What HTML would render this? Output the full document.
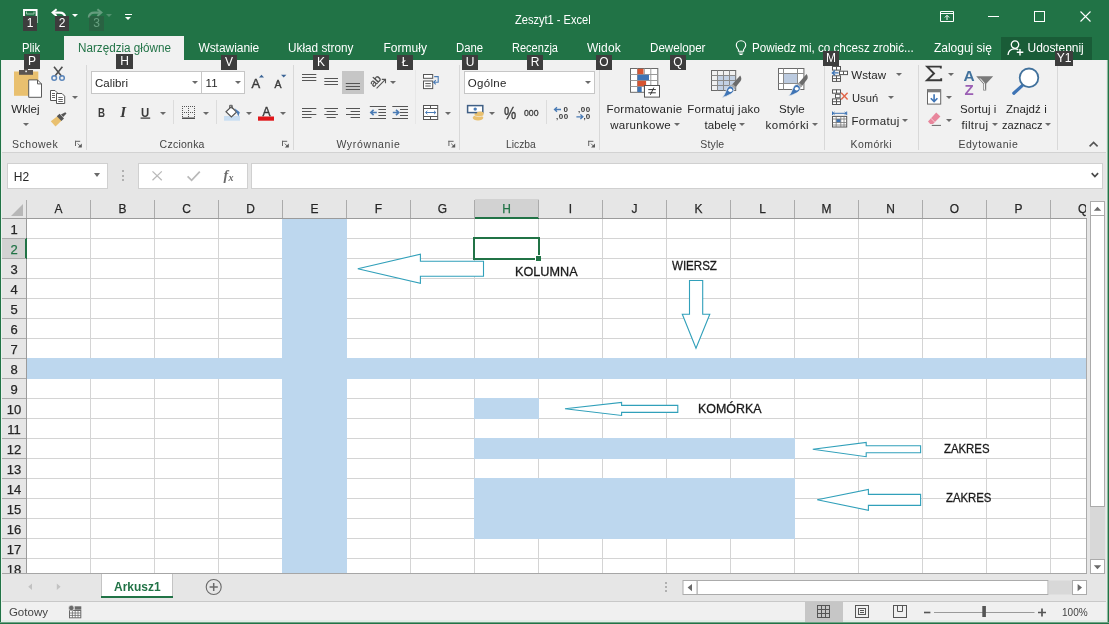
<!DOCTYPE html>
<html><head><meta charset="utf-8">
<style>
*{box-sizing:border-box;margin:0;padding:0}
html,body{width:1109px;height:624px;overflow:hidden}
body{position:relative;background:#e6e6e6;font-family:"Liberation Sans",sans-serif;font-size:12px;color:#262626}
.a{position:absolute}
svg{position:absolute;overflow:visible}
.t{position:absolute;white-space:nowrap}
.kt{position:absolute;background:#3d3d3d;color:#fff;font-size:12px;line-height:15px;height:15px;text-align:center}
.sep{position:absolute;top:65px;width:1px;height:85px;background:#d8d8d8}
.dd{position:absolute;width:0;height:0;border-left:3px solid transparent;border-right:3px solid transparent;border-top:3px solid #6a6a6a}
.ch{position:absolute;top:200px;height:18px;font-size:13px;line-height:18px;text-align:center;color:#262626;width:64px;-webkit-text-stroke:.25px;transform:scaleX(.92)}
.rh{position:absolute;left:1px;width:26px;height:20px;font-size:13px;line-height:21px;text-align:center;color:#262626;-webkit-text-stroke:.25px}
.box{position:absolute;background:#fff;border:1px solid #c6c6c6}
</style></head><body>
<div class="a" style="left:0;top:0;width:1109px;height:60px;background:#217346"></div>
<div class="a" style="left:64px;top:36px;width:120px;height:24px;background:#f1f1f1"></div>
<div class="a" style="left:1px;top:60px;width:1106px;height:92px;background:#f1f1f1"></div>
<div class="a" style="left:1px;top:152px;width:1106px;height:1px;background:#d2d2d2"></div>
<!-- QAT: save -->
<svg style="left:22.6px;top:8.6px" width="15" height="14" viewBox="0 0 15 14"><path d="M1 1H13.6V13H1Z" fill="none" stroke="#fff" stroke-width="1.9"/><path d="M3.5 2.5V5H11V2.5" fill="none" stroke="#9cc4ad" stroke-width="1"/></svg>
<!-- undo -->
<svg style="left:51px;top:8px" width="16" height="12" viewBox="0 0 16 12"><path d="M5.6 1.2L1.6 4.6L5.6 8" fill="none" stroke="#fff" stroke-width="2"/><path d="M2.2 4.6H8.5C12 4.6 14 6.5 14.2 9.5" fill="none" stroke="#fff" stroke-width="2.1"/></svg>
<div class="dd" style="left:72px;top:13.5px;border-top-color:#fff"></div>
<!-- redo (disabled) -->
<svg style="left:87px;top:8px;opacity:.3" width="16" height="12" viewBox="0 0 16 12"><path d="M10.4 1.2L14.4 4.6L10.4 8" fill="none" stroke="#fff" stroke-width="2"/><path d="M13.8 4.6H7.5C4 4.6 2 6.5 1.8 9.5" fill="none" stroke="#fff" stroke-width="2.1"/></svg>
<div class="dd" style="left:106px;top:13.5px;border-top-color:#fff;opacity:.22"></div>
<!-- customize QAT -->
<div class="a" style="left:125px;top:14px;width:7px;height:1px;background:#fff"></div>
<div class="dd" style="left:125px;top:17px;border-top-color:#fff;border-left-width:3.5px;border-right-width:3.5px;border-top-width:3.5px"></div>
<!-- window controls -->
<svg style="left:940px;top:11px" width="14" height="11" viewBox="0 0 14 11"><path d="M.5 .5H13.5V10.5H.5Z M.5 2.5H13.5" fill="none" stroke="#fff" stroke-width="1"/><path d="M7 9V4.5M4.8 6.5L7 4.3L9.2 6.5" fill="none" stroke="#fff" stroke-width="1"/></svg>
<div class="a" style="left:988px;top:16px;width:11px;height:1px;background:#fff"></div>
<div class="a" style="left:1034px;top:11px;width:11px;height:11px;border:1px solid #fff"></div>
<svg style="left:1080px;top:11px" width="11" height="11" viewBox="0 0 11 11"><path d="M.5 .5L10.5 10.5M10.5 .5L.5 10.5" stroke="#fff" stroke-width="1.1"/></svg>
<!-- lightbulb -->
<svg style="left:735px;top:40px" width="12" height="15" viewBox="0 0 12 15"><path d="M6 .7C3.2 .7 1.3 2.8 1.3 5.2C1.3 7.2 2.6 8.2 3.4 9.6V11.2H8.6V9.6C9.4 8.2 10.7 7.2 10.7 5.2C10.7 2.8 8.8 .7 6 .7Z" fill="none" stroke="#fff" stroke-width="1.1"/><path d="M3.8 13H8.2M4.5 14.5H7.5" stroke="#fff" stroke-width="1"/></svg>
<!-- share -->
<div class="a" style="left:1001px;top:37px;width:91px;height:23px;background:#195c37"></div>
<svg style="left:1007px;top:40px" width="18" height="16" viewBox="0 0 18 16"><circle cx="8" cy="4.6" r="3.7" fill="none" stroke="#fff" stroke-width="1.3"/><path d="M1 15C1.2 11 4 8.8 8 8.8C9.5 8.8 10.5 9.2 11.2 9.6" fill="none" stroke="#fff" stroke-width="1.3"/><path d="M13 9V15.5M9.8 12.2H16.3" stroke="#fff" stroke-width="1.4"/></svg>

<div class="sep" style="left:86px"></div><div class="sep" style="left:293px"></div><div class="sep" style="left:459px"></div><div class="sep" style="left:599px"></div><div class="sep" style="left:824px"></div><div class="sep" style="left:918px"></div><div class="sep" style="left:1057px"></div>
<div class="a" style="left:173px;top:100px;width:1px;height:24px;background:#dcdcdc"></div>
<div class="a" style="left:216px;top:100px;width:1px;height:24px;background:#dcdcdc"></div>
<div class="a" style="left:415px;top:70px;width:1px;height:54px;background:#e7e7e7"></div>
<div class="a" style="left:546px;top:100px;width:1px;height:24px;background:#dcdcdc"></div>
<div class="box" style="left:91px;top:71px;width:111px;height:23px"></div>
<div class="box" style="left:201px;top:71px;width:44px;height:23px"></div>
<div class="box" style="left:464px;top:71px;width:131px;height:23px"></div>
<div class="a" style="left:342px;top:71px;width:22px;height:23px;background:#c6c6c6"></div>
<svg style="left:0;top:0" width="1109" height="160" viewBox="0 0 1109 160">

<!-- dialog launchers -->
<g transform="translate(75 140.8)"><path d="M0 .5H5.2M.5 0V5.2M2.8 2.8L5.6 5.6" fill="none" stroke="#666" stroke-width="1"/><path d="M6.8 2.8V6.8H2.8Z" fill="#5a5a5a"/></g><g transform="translate(282 140.8)"><path d="M0 .5H5.2M.5 0V5.2M2.8 2.8L5.6 5.6" fill="none" stroke="#666" stroke-width="1"/><path d="M6.8 2.8V6.8H2.8Z" fill="#5a5a5a"/></g><g transform="translate(448.4 140.8)"><path d="M0 .5H5.2M.5 0V5.2M2.8 2.8L5.6 5.6" fill="none" stroke="#666" stroke-width="1"/><path d="M6.8 2.8V6.8H2.8Z" fill="#5a5a5a"/></g><g transform="translate(588.2 140.8)"><path d="M0 .5H5.2M.5 0V5.2M2.8 2.8L5.6 5.6" fill="none" stroke="#666" stroke-width="1"/><path d="M6.8 2.8V6.8H2.8Z" fill="#5a5a5a"/></g>
<!-- PASTE -->
<rect x="14" y="71.5" width="24.3" height="24.3" fill="#e9c06f"/>
<rect x="19" y="70" width="14" height="4.8" fill="#5b5450"/><rect x="24" y="68" width="4" height="3" fill="#5b5450"/><rect x="25.3" y="70.6" width="1.6" height="1.6" fill="#f1f1f1"/>
<path d="M28.7 79.9H37.5L41.5 83.9V97.3H28.7Z" fill="#fff" stroke="#5a5a5a" stroke-width="1"/><path d="M37.5 79.9V83.9H41.5" fill="none" stroke="#5a5a5a" stroke-width="1"/>
<!-- scissors -->
<path d="M54 66.8L61.6 76.2M62.4 66.8L54.8 76.2" stroke="#4f4f4f" stroke-width="1.6" fill="none"/>
<circle cx="54.2" cy="78" r="2.3" fill="none" stroke="#5b86bb" stroke-width="1.5"/><circle cx="62" cy="78" r="2.3" fill="none" stroke="#5b86bb" stroke-width="1.5"/>
<!-- copy -->
<path d="M50.5 90.5H55L57.2 92.7V100.5H50.5Z" fill="#fff" stroke="#555" stroke-width="1"/><path d="M52 93.5H55M52 95.5H55M52 97.5H55" stroke="#555" stroke-width=".9"/>
<path d="M56.5 93.5H62L64.7 96.2V103.5H56.5Z" fill="#fff" stroke="#555" stroke-width="1"/><path d="M58.3 97.5H62.8M58.3 99.5H62.8M58.3 101.5H62.8" stroke="#555" stroke-width=".9"/>
<!-- painter -->
<path d="M57.3 116.3L61.5 120.8L55.5 126.6L50.8 121.2Z" fill="#e9c06f"/>
<path d="M56.8 116.2L59.6 113.8L64 118.6L61.4 121Z" fill="#555"/><path d="M61 114.5L65.3 112.2L66.5 113.6L63.2 117Z" fill="#555"/>
</svg>
<div class="dd" style="left:23px;top:123px"></div>
<div class="dd" style="left:72px;top:96px"></div>

<svg style="left:0;top:0" width="1109" height="160" viewBox="0 0 1109 160">
<!-- underline for U -->
<rect x="140.6" y="117.5" width="9.6" height="1.2" fill="#333"/>
<!-- border icon -->
<g stroke="#555" stroke-width="1" fill="none"><path d="M182.5 106V118M188.5 106V118M194.5 106V118M182 106.5H195M182 112.5H195" stroke-dasharray="1 1"/><path d="M182 118.2H195" stroke="#333" stroke-width="1.3"/></g>
<!-- bucket -->
<rect x="224" y="116" width="16" height="4.7" fill="#c9def2"/>
<path d="M231.2 106.8L236.6 112L231.4 117L226 111.8Z" fill="#fff" stroke="#555" stroke-width="1.2"/>
<path d="M229.7 108.5V105.3H232.2V109" fill="none" stroke="#555" stroke-width="1"/>
<path d="M234.6 108.2L239.8 112.3L238.3 116.6L236.8 112.5Z" fill="#4a7bb5"/>
<!-- font color bar -->
<rect x="258" y="116.5" width="16" height="4.2" fill="#e0171b"/>
<!-- grow/shrink font triangles -->
<path d="M259 77.5L261.5 74.8L264 77.5Z" fill="#3b6496"/>
<path d="M281 74.8H286.4L283.7 77.5Z" fill="#3b6496"/>
</svg>
<div class="dd" style="left:192px;top:81px"></div>
<div class="dd" style="left:235px;top:81px"></div>
<div class="dd" style="left:585px;top:81px"></div>
<div class="dd" style="left:160px;top:112px"></div>
<div class="dd" style="left:203px;top:112px"></div>
<div class="dd" style="left:246px;top:112px"></div>
<div class="dd" style="left:280px;top:112px"></div>

<svg style="left:0;top:0;will-change:transform" width="1109" height="160" viewBox="0 0 1109 160">
<g stroke="#555" stroke-width="1.1" fill="none">
<!-- top/middle/bottom align -->
<path d="M302 74.5H316.3M302 77.5H316.3M302 80.5H316.3"/>
<path d="M324.3 78.5H338M324.3 81.5H338M324.3 84.5H338"/>
<path d="M345.8 83.5H360M345.8 86.5H360M345.8 89.5H360"/>
<!-- left/center/right -->
<path d="M302 108.5H316.3M302 111.5H311.5M302 114.5H316.3M302 117.5H311.5"/>
<path d="M324.3 108.5H338M326.6 111.5H335.7M324.3 114.5H338M326.6 117.5H335.7"/>
<path d="M346 108.5H360M350.6 111.5H360M346 114.5H360M350.6 117.5H360"/>
<!-- indents -->
<path d="M369.8 106.5H386M378.4 109.5H386M378.4 112.5H386M378.4 115.5H386M369.8 118.5H386"/>
<path d="M392.3 106.5H408M400 109.5H408M400 112.5H408M400 115.5H408M392.3 118.5H408"/>
</g>
<g stroke="#4a7bb5" stroke-width="1.6" fill="none"><path d="M376.8 112.5H371M373.6 109.8L370.8 112.5L373.6 115.2"/><path d="M392.8 112.5H398.6M396 109.8L398.8 112.5L396 115.2"/></g>
<!-- orientation -->
<g transform="translate(376.6 80.6) rotate(-47)"><text x="-7" y="2.6" font-family="Liberation Sans,sans-serif" font-size="10.5" fill="#444" stroke="#444" stroke-width=".3">ab</text></g>
<path d="M376.6 88.4L385.2 79.6M381.8 79.4H385.5V83.2" stroke="#555" stroke-width="1.1" fill="none"/>
<!-- wrap text -->
<g stroke="#555" stroke-width="1" fill="none"><rect x="423.5" y="74.5" width="9.2" height="3.8" fill="#fff"/><rect x="423.5" y="81" width="9.2" height="7.6" fill="#fff"/><path d="M425.3 83.6H430.8M425.3 86H430.8"/></g>
<path d="M434.2 76.6H438.2V82.3H433.8M435.8 80.2L433.6 82.3L435.8 84.4" stroke="#4a7bb5" stroke-width="1.1" fill="none"/>
<!-- merge -->
<g stroke="#555" stroke-width="1" fill="none"><rect x="423.5" y="105.5" width="14.2" height="14" fill="#fff"/><path d="M423.5 108.5H437.7M423.5 116.5H437.7M430.5 105.5V108.5M430.5 116.5V119.5"/></g>
<path d="M425.6 112.5H435.8M427.4 110.8L425.6 112.5L427.4 114.2M434 110.8L435.8 112.5L434 114.2" stroke="#4a7bb5" stroke-width="1" fill="none"/>
<!-- currency -->
<ellipse cx="478" cy="117.8" rx="5.3" ry="2.6" fill="#e9c06f"/><ellipse cx="479" cy="114.2" rx="4.8" ry="2.4" fill="#e9c06f" stroke="#f1f1f1" stroke-width=".6"/>
<rect x="467.6" y="105.6" width="15.2" height="7" fill="#fff" stroke="#3f5f85" stroke-width="1.5"/><circle cx="475.2" cy="109.1" r="1.7" fill="#4a7bb5"/>
<ellipse cx="480.2" cy="113.3" rx="3.4" ry="1.7" fill="#e9c06f"/>
<!-- decimals arrows -->
<g stroke="#4a7bb5" stroke-width="1.3" fill="none"><path d="M561 109.5H554.6M557 107.2L554.5 109.5L557 111.8"/><path d="M576.4 116.8H582.8M580.4 114.5L582.9 116.8L580.4 119.1"/></g>
</svg>
<div class="dd" style="left:390px;top:81px"></div>
<div class="dd" style="left:445px;top:112px"></div>
<div class="dd" style="left:489px;top:112px"></div>

<svg style="left:0;top:0" width="1109" height="160" viewBox="0 0 1109 160">
<!-- conditional formatting -->
<rect x="630.5" y="68.5" width="27.3" height="23.8" fill="#fff" stroke="#6a6a6a" stroke-width="1"/>
<path d="M630.5 74.5H657.8M630.5 80.5H657.8M630.5 86.5H657.8M637.5 68.5V92.3M644.3 68.5V92.3M650.8 68.5V92.3" stroke="#9a9a9a" stroke-width="1" fill="none"/>
<rect x="637.5" y="68.8" width="6" height="5.4" fill="#d65532"/><rect x="637.5" y="74.8" width="11.5" height="5.4" fill="#3e74b5"/><rect x="637.5" y="80.8" width="8.6" height="5.4" fill="#d65532"/><rect x="637.5" y="86.8" width="4.2" height="5.2" fill="#3e74b5"/>
<rect x="644.5" y="85.5" width="15" height="11.6" fill="#fff" stroke="#555" stroke-width="1"/>
<path d="M648.3 89.6H655.8M648.3 92.8H655.8M653.8 87.6L650.4 94.8" stroke="#333" stroke-width="1" fill="none"/>
<!-- format as table -->
<rect x="717.5" y="75.2" width="18" height="15" fill="#c3d1e4"/>
<rect x="711.5" y="70.5" width="24.2" height="20" fill="none" stroke="#6a6a6a" stroke-width="1"/>
<path d="M711.5 75.5H735.7M711.5 80.5H735.7M711.5 85.5H735.7M717.5 70.5V90.5M723.5 70.5V90.5M729.5 70.5V90.5" stroke="#8a8a8a" stroke-width="1" fill="none"/>
<path d="M740.2 75.4C741.6 77.4 741.6 79.6 740.6 81L734.6 88.6L731.2 85.6Z" fill="#6b6b6b"/><path d="M732.6 84L736 87L733.6 89.6L730.2 86.6Z" fill="#a5a5a5"/>
<path d="M731 86C735.2 88 734.6 92 730.4 94.2C727.8 95.6 725.2 96.8 722.2 97.4C724.8 94.8 725.4 92.2 726.4 90C727.4 87.4 729 85.4 731 86Z" fill="#3e74b5" stroke="#f1f1f1" stroke-width=".7"/><ellipse cx="730.3" cy="90.2" rx="2" ry="1.7" fill="#fff"/>
<!-- cell styles -->
<rect x="778.5" y="68.5" width="25.4" height="21" fill="#fff" stroke="#6a6a6a" stroke-width="1"/>
<rect x="783.7" y="73.7" width="13.6" height="9.3" fill="#bccbe0"/>
<path d="M778.5 73.5H803.9M778.5 83.5H803.9M783.5 68.5V89.5M797.5 68.5V89.5" stroke="#8a8a8a" stroke-width="1" fill="none"/>
<path d="M806.6 74C808 76 808 78.2 807 79.6L801 87.2L797.6 84.2Z" fill="#6b6b6b"/><path d="M799 82.6L802.4 85.6L800 88.2L796.6 85.2Z" fill="#a5a5a5"/>
<path d="M797.4 84.6C801.6 86.6 801 90.6 796.8 92.8C794.2 94.2 791.6 95.4 788.6 96C791.2 93.4 791.8 90.8 792.8 88.6C793.8 86 795.4 84 797.4 84.6Z" fill="#3e74b5" stroke="#f1f1f1" stroke-width=".7"/><ellipse cx="796.7" cy="88.8" rx="2" ry="1.7" fill="#fff"/>
<!-- insert cells -->
<g stroke="#555" stroke-width="1" fill="#fff"><rect x="832.5" y="66.5" width="8" height="3.6"/><path d="M836.5 66.5V70.1" fill="none"/><rect x="839.5" y="71.2" width="8" height="3.4"/><path d="M843.5 71.2V74.6" fill="none"/><rect x="832.5" y="75.8" width="8" height="5.6"/><path d="M836.5 75.8V81.4M832.5 78.6H840.5" fill="none"/></g>
<path d="M838.6 72.9H832.6M835 70.6L832.4 72.9L835 75.2" stroke="#3e74b5" stroke-width="1.4" fill="none"/>
<!-- delete cells -->
<g stroke="#555" stroke-width="1" fill="#fff"><rect x="832.5" y="89.8" width="8" height="3.4"/><path d="M836.5 89.8V93.2" fill="none"/><rect x="835.5" y="94.3" width="4.6" height="3.5"/><rect x="832.5" y="98.9" width="8" height="5.6"/><path d="M836.5 98.9V104.5M832.5 101.7H840.5" fill="none"/></g>
<path d="M841.2 92.8L847.6 99.4M847.6 92.8L841.2 99.4" stroke="#e0674a" stroke-width="1.5" fill="none"/>
<!-- format cells -->
<path d="M832.5 113.3H846.7M832.5 111.5V115M846.7 111.5V115M834.5 112L833 113.3L834.5 114.6M844.7 112L846.2 113.3L844.7 114.6" stroke="#3e74b5" stroke-width="1" fill="none"/>
<rect x="832.5" y="116.4" width="14.2" height="10.6" fill="#fff" stroke="#555" stroke-width="1"/>
<rect x="836.3" y="119" width="4.4" height="3.4" fill="#3e74b5"/>
<path d="M832.5 119H846.7M832.5 122.5H846.7M832.5 125H846.7M836.2 116.4V127M840.8 116.4V127M844 116.4V127" stroke="#777" stroke-width=".8" fill="none"/>
<!-- sigma -->
<path d="M940.8 68.4V66.6H927.2L934 73.5L927 80.3H941.2V78.2" fill="none" stroke="#3a3a3a" stroke-width="1.9" stroke-linejoin="miter"/>
<!-- fill -->
<rect x="927.5" y="89.7" width="13.2" height="14.4" fill="#fff" stroke="#666" stroke-width="1"/><rect x="927.5" y="89.7" width="13.2" height="2.6" fill="#7c7c7c"/>
<path d="M934.1 94.2V101.2M930.8 98.2L934.1 101.5L937.4 98.2" stroke="#3e74b5" stroke-width="1.6" fill="none"/>
<!-- eraser -->
<path d="M936.2 112.6L940.4 116.6L933 124H930.2L928 121.4Z" fill="#e8869c"/><path d="M930.8 118.2L934.8 122.2" stroke="#f6cdd6" stroke-width="1"/>
<path d="M931.8 125.4H941" stroke="#666" stroke-width="1"/>
<!-- funnel -->
<path d="M976.2 76.2H993.2L986.2 83.8V90.6H983.2V83.8Z" fill="#7a7a7a"/><path d="M980 78.4L984.4 83.3V89.4H985.2" stroke="#fff" stroke-width="1" fill="none"/>
<!-- magnifier -->
<path d="M1022.2 85.6L1013.8 93.2" stroke="#3e74b5" stroke-width="3.2" stroke-linecap="round"/>
<circle cx="1029" cy="77.8" r="9.3" fill="#fff" stroke="#41719c" stroke-width="1.8"/>
<!-- collapse chevron -->
<path d="M1089.6 146.4L1093.6 142.4L1097.6 146.4" stroke="#555" stroke-width="1.6" fill="none"/>
</svg>
<div class="dd" style="left:674px;top:123px"></div>
<div class="dd" style="left:739px;top:123px"></div>
<div class="dd" style="left:812px;top:123px"></div>
<div class="dd" style="left:896px;top:73px"></div>
<div class="dd" style="left:888px;top:96px"></div>
<div class="dd" style="left:902px;top:119px"></div>
<div class="dd" style="left:948px;top:73px"></div>
<div class="dd" style="left:946px;top:96px"></div>
<div class="dd" style="left:946px;top:119px"></div>
<div class="dd" style="left:992px;top:123px"></div>
<div class="dd" style="left:1045px;top:123px"></div>

<div class="box" style="left:7px;top:163px;width:101px;height:26px;border-color:#d0d0d0"></div>
<div class="box" style="left:138px;top:163px;width:110px;height:26px;border-color:#d0d0d0"></div>
<div class="box" style="left:251px;top:163px;width:852px;height:26px;border-color:#d0d0d0"></div>
<div class="dd" style="left:94px;top:173px;border-left-width:3.5px;border-right-width:3.5px;border-top-width:4px"></div>
<div class="a" style="left:122px;top:170px;width:2px;height:2px;background:#b0b0b0"></div>
<div class="a" style="left:122px;top:175px;width:2px;height:2px;background:#b0b0b0"></div>
<div class="a" style="left:122px;top:179px;width:2px;height:2px;background:#b0b0b0"></div>
<svg style="left:0;top:155px;will-change:transform" width="1109" height="40" viewBox="0 155 1109 40">
<path d="M152.5 171.4L161.8 180.2M161.8 171.4L152.5 180.2" stroke="#b9b9b9" stroke-width="1.3" fill="none"/>
<path d="M187.6 176.4L191.6 180.4L199.8 171.6" stroke="#b9b9b9" stroke-width="1.7" fill="none"/>
<text x="223.6" y="180.4" font-family="Liberation Serif,serif" font-style="italic" font-weight="700" font-size="14" fill="#6a6a6a">f</text>
<text x="228.4" y="180.6" font-family="Liberation Serif,serif" font-style="italic" font-weight="700" font-size="10" fill="#6a6a6a">x</text>
<path d="M1091.7 173.2L1094.9 176.5L1098.1 173.2" stroke="#4a4a4a" stroke-width="1.7" fill="none"/>
</svg>

<div id="grid" class="a" style="left:0;top:0;width:1109px;height:624px;will-change:transform">
<div class="a" style="left:27px;top:219px;width:1060px;height:355px;background:#fff"></div>
<div class="a" style="left:27px;top:219px;width:1060px;height:355px;background-image:repeating-linear-gradient(to right,transparent 0,transparent 63px,#d4d4d4 63px,#d4d4d4 64px),repeating-linear-gradient(to bottom,transparent 0,transparent 19px,#d4d4d4 19px,#d4d4d4 20px)"></div>
<div class="a" style="left:282px;top:219px;width:65px;height:355px;background:#bdd7ee"></div>
<div class="a" style="left:27px;top:358px;width:1060px;height:21px;background:#bdd7ee"></div>
<div class="a" style="left:474px;top:398px;width:65px;height:21px;background:#bdd7ee"></div>
<div class="a" style="left:474px;top:438px;width:321px;height:21px;background:#bdd7ee"></div>
<div class="a" style="left:474px;top:478px;width:321px;height:61px;background:#bdd7ee"></div>
<div class="a" style="left:1086px;top:219px;width:1px;height:355px;background:#ababab"></div>
<div class="a" style="left:1px;top:199px;width:1086px;height:20px;background:#e6e6e6"></div>
<div class="a" style="left:1px;top:219px;width:26px;height:355px;background:#e6e6e6"></div>
<div class="a" style="left:475px;top:199px;width:64px;height:19px;background:#d2d2d2"></div>
<div class="a" style="left:1px;top:239px;width:25px;height:19px;background:#d2d2d2"></div>
<div class="a" style="left:1px;top:218px;width:1086px;height:1px;background:#9b9b9b"></div>
<div class="a" style="left:26px;top:219px;width:1px;height:355px;background:#9b9b9b"></div>
<div class="a" style="left:475px;top:217px;width:64px;height:2px;background:#217346"></div>
<div class="a" style="left:25px;top:238px;width:2px;height:21px;background:#217346"></div>
<div class="ch" style="left:27px;color:#262626;width:63px">A</div>
<div class="a" style="left:26px;top:200px;width:1px;height:18px;background:#ababab"></div>
<div class="ch" style="left:91px;color:#262626;width:63px">B</div>
<div class="a" style="left:90px;top:200px;width:1px;height:18px;background:#ababab"></div>
<div class="ch" style="left:155px;color:#262626;width:63px">C</div>
<div class="a" style="left:154px;top:200px;width:1px;height:18px;background:#ababab"></div>
<div class="ch" style="left:219px;color:#262626;width:63px">D</div>
<div class="a" style="left:218px;top:200px;width:1px;height:18px;background:#ababab"></div>
<div class="ch" style="left:283px;color:#262626;width:63px">E</div>
<div class="a" style="left:282px;top:200px;width:1px;height:18px;background:#ababab"></div>
<div class="ch" style="left:347px;color:#262626;width:63px">F</div>
<div class="a" style="left:346px;top:200px;width:1px;height:18px;background:#ababab"></div>
<div class="ch" style="left:411px;color:#262626;width:63px">G</div>
<div class="a" style="left:410px;top:200px;width:1px;height:18px;background:#ababab"></div>
<div class="ch" style="left:475px;color:#217346;width:63px">H</div>
<div class="a" style="left:474px;top:200px;width:1px;height:18px;background:#ababab"></div>
<div class="ch" style="left:539px;color:#262626;width:63px">I</div>
<div class="a" style="left:538px;top:200px;width:1px;height:18px;background:#ababab"></div>
<div class="ch" style="left:603px;color:#262626;width:63px">J</div>
<div class="a" style="left:602px;top:200px;width:1px;height:18px;background:#ababab"></div>
<div class="ch" style="left:667px;color:#262626;width:63px">K</div>
<div class="a" style="left:666px;top:200px;width:1px;height:18px;background:#ababab"></div>
<div class="ch" style="left:731px;color:#262626;width:63px">L</div>
<div class="a" style="left:730px;top:200px;width:1px;height:18px;background:#ababab"></div>
<div class="ch" style="left:795px;color:#262626;width:63px">M</div>
<div class="a" style="left:794px;top:200px;width:1px;height:18px;background:#ababab"></div>
<div class="ch" style="left:859px;color:#262626;width:63px">N</div>
<div class="a" style="left:858px;top:200px;width:1px;height:18px;background:#ababab"></div>
<div class="ch" style="left:923px;color:#262626;width:63px">O</div>
<div class="a" style="left:922px;top:200px;width:1px;height:18px;background:#ababab"></div>
<div class="ch" style="left:987px;color:#262626;width:63px">P</div>
<div class="a" style="left:986px;top:200px;width:1px;height:18px;background:#ababab"></div>
<div class="ch" style="left:1051px;color:#262626;width:35px;overflow:hidden;transform:none"><span style="position:absolute;left:27px;transform:scaleX(.92);transform-origin:0 0">Q</span></div>
<div class="a" style="left:1050px;top:200px;width:1px;height:18px;background:#ababab"></div>
<div class="rh" style="top:219px;color:#262626">1</div>
<div class="a" style="left:1px;top:238px;width:25px;height:1px;background:#ababab"></div>
<div class="rh" style="top:239px;color:#217346">2</div>
<div class="a" style="left:1px;top:258px;width:25px;height:1px;background:#ababab"></div>
<div class="rh" style="top:259px;color:#262626">3</div>
<div class="a" style="left:1px;top:278px;width:25px;height:1px;background:#ababab"></div>
<div class="rh" style="top:279px;color:#262626">4</div>
<div class="a" style="left:1px;top:298px;width:25px;height:1px;background:#ababab"></div>
<div class="rh" style="top:299px;color:#262626">5</div>
<div class="a" style="left:1px;top:318px;width:25px;height:1px;background:#ababab"></div>
<div class="rh" style="top:319px;color:#262626">6</div>
<div class="a" style="left:1px;top:338px;width:25px;height:1px;background:#ababab"></div>
<div class="rh" style="top:339px;color:#262626">7</div>
<div class="a" style="left:1px;top:358px;width:25px;height:1px;background:#ababab"></div>
<div class="rh" style="top:359px;color:#262626">8</div>
<div class="a" style="left:1px;top:378px;width:25px;height:1px;background:#ababab"></div>
<div class="rh" style="top:379px;color:#262626">9</div>
<div class="a" style="left:1px;top:398px;width:25px;height:1px;background:#ababab"></div>
<div class="rh" style="top:399px;color:#262626">10</div>
<div class="a" style="left:1px;top:418px;width:25px;height:1px;background:#ababab"></div>
<div class="rh" style="top:419px;color:#262626">11</div>
<div class="a" style="left:1px;top:438px;width:25px;height:1px;background:#ababab"></div>
<div class="rh" style="top:439px;color:#262626">12</div>
<div class="a" style="left:1px;top:458px;width:25px;height:1px;background:#ababab"></div>
<div class="rh" style="top:459px;color:#262626">13</div>
<div class="a" style="left:1px;top:478px;width:25px;height:1px;background:#ababab"></div>
<div class="rh" style="top:479px;color:#262626">14</div>
<div class="a" style="left:1px;top:498px;width:25px;height:1px;background:#ababab"></div>
<div class="rh" style="top:499px;color:#262626">15</div>
<div class="a" style="left:1px;top:518px;width:25px;height:1px;background:#ababab"></div>
<div class="rh" style="top:519px;color:#262626">16</div>
<div class="a" style="left:1px;top:538px;width:25px;height:1px;background:#ababab"></div>
<div class="rh" style="top:539px;color:#262626">17</div>
<div class="a" style="left:1px;top:558px;width:25px;height:1px;background:#ababab"></div>
<div class="rh" style="top:559px;color:#262626">18</div>
<svg class="a" style="left:10px;top:203px" width="14" height="14"><path d="M13 1V13H1Z" fill="#b7b7b7"/></svg>
<div class="a" style="left:473px;top:237px;width:67px;height:23px;border:2px solid #217346"></div>
<div class="a" style="left:535px;top:255px;width:6px;height:6px;background:#217346;border-left:1px solid #fff;border-top:1px solid #fff"></div>
</div>
<!-- hide gridlines under overflowing text -->
<div class="a" style="left:538px;top:261px;width:1px;height:17px;background:#fff"></div>
<div class="a" style="left:730px;top:399px;width:1px;height:19px;background:#fff"></div>
<div class="a" style="left:986px;top:439px;width:1px;height:19px;background:#fff"></div>
<svg style="left:0;top:219px" width="1109" height="355" viewBox="0 219 1109 355">
<g fill="#fff" stroke="#31a0ba" stroke-width="1.1" stroke-linejoin="miter">
<path d="M357.8 268.7L420.4 254.2V261.2H483.5V276.3H420.4V283.4Z"/>
<path d="M689.5 280.5H702.7V314.3H709.8L696 348.3L682.3 314.3H689.5Z"/>
<path d="M565 408.8L621.6 402.4V405.4H677.8V412.4H621.6V415.5Z"/>
<path d="M812.8 449.2L866.2 442.4V445.7H920.6V452.7H866.2V456.7Z"/>
<path d="M817.2 499.7L868.4 489.4V494.4H920.6V505.4H868.4V510.4Z"/>
</g>
</svg>

<!-- grid bottom line & sheet tab row -->
<div class="a" style="left:1px;top:574px;width:1105px;height:27px;background:#e6e6e6"></div>
<div class="a" style="left:1px;top:573px;width:1086px;height:1px;background:#a6a6a6"></div>
<div class="a" style="left:101px;top:574px;width:72px;height:22px;background:#fff;border-left:1px solid #c4c4c4;border-right:1px solid #c4c4c4"></div>
<div class="a" style="left:101px;top:596px;width:72px;height:2px;background:#217346"></div>
<svg style="left:0;top:570px" width="1109" height="54" viewBox="0 570 1109 54">
<path d="M32 583.4V590L28.2 586.7Z" fill="#c2c2c2"/><path d="M56.8 583.4V590L60.6 586.7Z" fill="#c2c2c2"/>
<circle cx="213.7" cy="587" r="7.5" fill="none" stroke="#6a6a6a" stroke-width="1.1"/><path d="M209.6 587H217.8M213.7 582.9V591.1" stroke="#6a6a6a" stroke-width="1.5"/>
<!-- hscroll -->
<rect x="697" y="580.5" width="351" height="14" fill="#fff" stroke="#ababab" stroke-width="1"/>
<rect x="1048.5" y="580.5" width="24" height="14" fill="#d8d8d8"/>
<rect x="683" y="580.5" width="14" height="14" fill="#fff" stroke="#ababab" stroke-width="1"/><path d="M692 584V591.2L687.6 587.6Z" fill="#6a6a6a"/>
<rect x="1072.5" y="580.5" width="14" height="14" fill="#fff" stroke="#ababab" stroke-width="1"/><path d="M1077.6 584V591.2L1082 587.6Z" fill="#6a6a6a"/>
</svg>
<div class="a" style="left:665px;top:582px;width:2px;height:2px;background:#b0b0b0"></div>
<div class="a" style="left:665px;top:586px;width:2px;height:2px;background:#b0b0b0"></div>
<div class="a" style="left:665px;top:590px;width:2px;height:2px;background:#b0b0b0"></div>
<!-- status bar -->
<div class="a" style="left:1px;top:601px;width:1105px;height:21px;background:#f0f0f0;border-top:1px solid #c8c8c8"></div>
<div class="a" style="left:1px;top:620px;width:1105px;height:2px;background:#e3ede7"></div>
<div class="a" style="left:805px;top:602px;width:38px;height:20px;background:#c6c6c6"></div>
<svg style="left:0;top:600px" width="1109" height="24" viewBox="0 600 1109 24">
<rect x="69.5" y="610.5" width="11.3" height="7.3" fill="#fff" stroke="#6a6a6a" stroke-width="1"/><rect x="74.6" y="606.3" width="6.7" height="3.4" fill="#6a6a6a"/>
<path d="M69.5 613H80.8M69.5 615.4H80.8M72.4 610.5V617.8M75.2 610.5V617.8M78 610.5V617.8" stroke="#6a6a6a" stroke-width=".8"/>
<circle cx="71.3" cy="608" r="2.7" fill="#6a6a6a" stroke="#f0f0f0" stroke-width=".6"/>
<g stroke="#555" stroke-width="1" fill="none">
<rect x="817.5" y="605.5" width="12" height="12"/><path d="M817.5 609.5H829.5M817.5 613.5H829.5M821.5 605.5V617.5M825.5 605.5V617.5"/>
<rect x="855.5" y="605.5" width="13" height="12"/><rect x="858.5" y="608.5" width="7" height="6"/><path d="M860 610.5H864M860 612.5H864"/>
<rect x="893.5" y="605.5" width="13" height="12"/><path d="M897.5 605.5V611.5H902.5V605.5"/>
</g>
<path d="M924 612.5H930.4" stroke="#555" stroke-width="1.6"/>
<path d="M934 612.5H1034.5" stroke="#9a9a9a" stroke-width="1"/>
<rect x="982.3" y="606" width="3.6" height="11" fill="#555"/>
<path d="M1038 612.5H1046M1042 608.5V616.5" stroke="#555" stroke-width="1.7"/>
</svg>
<!-- vscroll -->
<div class="a" style="left:1090px;top:201px;width:15px;height:373px;background:#d8d8d8"></div>
<div class="a" style="left:1090px;top:201px;width:15px;height:15px;background:#fff;border:1px solid #ababab"></div>
<div class="a" style="left:1090px;top:215px;width:15px;height:292px;background:#fff;border:1px solid #ababab"></div>
<div class="a" style="left:1090px;top:559px;width:15px;height:15px;background:#fff;border:1px solid #ababab"></div>
<svg style="left:1090px;top:201px" width="15" height="373" viewBox="0 0 15 373"><path d="M3.8 9.8H11.2L7.5 5.8Z" fill="#6a6a6a"/><path d="M3.8 364.2H11.2L7.5 368.2Z" fill="#6a6a6a"/></svg>

<div class="a" style="left:0;top:0;width:1109px;height:624px;will-change:transform"><div class="t" style="left:515.0px;top:14.0px;font-size:12px;line-height:12px;color:#ffffff;transform:scaleX(0.923);transform-origin:0 0;">Zeszyt1 - Excel</div>
<div class="t" style="left:21.6px;top:42.0px;font-size:12px;line-height:12px;color:#ffffff;transform:scaleX(0.936);transform-origin:0 0;">Plik</div>
<div class="t" style="left:77.5px;top:42.0px;font-size:12px;line-height:12px;color:#217346;transform:scaleX(0.974);transform-origin:0 0;">Narzędzia główne</div>
<div class="t" style="left:198.4px;top:42.0px;font-size:12px;line-height:12px;color:#ffffff;letter-spacing:-0.05px;">Wstawianie</div>
<div class="t" style="left:288.2px;top:42.0px;font-size:12px;line-height:12px;color:#ffffff;transform:scaleX(0.982);transform-origin:0 0;">Układ strony</div>
<div class="t" style="left:383.4px;top:42.0px;font-size:12px;line-height:12px;color:#ffffff;letter-spacing:0.04px;">Formuły</div>
<div class="t" style="left:456.2px;top:42.0px;font-size:12px;line-height:12px;color:#ffffff;transform:scaleX(0.945);transform-origin:0 0;">Dane</div>
<div class="t" style="left:512.2px;top:42.0px;font-size:12px;line-height:12px;color:#ffffff;transform:scaleX(0.919);transform-origin:0 0;">Recenzja</div>
<div class="t" style="left:586.9px;top:42.0px;font-size:12px;line-height:12px;color:#ffffff;letter-spacing:0.11px;">Widok</div>
<div class="t" style="left:650.4px;top:42.0px;font-size:12px;line-height:12px;color:#ffffff;transform:scaleX(0.967);transform-origin:0 0;">Deweloper</div>
<div class="t" style="left:752.3px;top:42.0px;font-size:12px;line-height:12px;color:#ffffff;transform:scaleX(0.970);transform-origin:0 0;">Powiedz mi, co chcesz zrobić...</div>
<div class="t" style="left:934.0px;top:42.0px;font-size:12px;line-height:12px;color:#ffffff;letter-spacing:-0.02px;">Zaloguj się</div>
<div class="t" style="left:1027.6px;top:42.0px;font-size:12px;line-height:12px;color:#ffffff;letter-spacing:-0.07px;">Udostępnij</div>
<div class="t" style="left:11.2px;top:104.0px;font-size:11.5px;line-height:11.5px;color:#262626;letter-spacing:0.09px;">Wklej</div>
<div class="t" style="left:12.0px;top:139.0px;font-size:10.5px;line-height:10.5px;color:#444444;letter-spacing:0.52px;">Schowek</div>
<div class="t" style="left:94.9px;top:78.0px;font-size:11.5px;line-height:11.5px;color:#262626;letter-spacing:0.10px;">Calibri</div>
<div class="t" style="left:205.6px;top:78.0px;font-size:11.5px;line-height:11.5px;color:#262626;">11</div>
<div class="t" style="left:159.6px;top:139.0px;font-size:10.5px;line-height:10.5px;color:#444444;letter-spacing:0.24px;">Czcionka</div>
<div class="t" style="left:336.4px;top:139.0px;font-size:10.5px;line-height:10.5px;color:#444444;letter-spacing:0.65px;">Wyrównanie</div>
<div class="t" style="left:467.7px;top:78.0px;font-size:11.5px;line-height:11.5px;color:#262626;letter-spacing:0.34px;">Ogólne</div>
<div class="t" style="left:506.4px;top:139.0px;font-size:10.5px;line-height:10.5px;color:#444444;transform:scaleX(0.978);transform-origin:0 0;">Liczba</div>
<div class="t" style="left:606.4px;top:104.0px;font-size:11.5px;line-height:11.5px;color:#262626;letter-spacing:0.26px;">Formatowanie</div>
<div class="t" style="left:610.2px;top:120.0px;font-size:11.5px;line-height:11.5px;color:#262626;letter-spacing:0.29px;">warunkowe</div>
<div class="t" style="left:687.3px;top:104.0px;font-size:11.5px;line-height:11.5px;color:#262626;letter-spacing:0.25px;">Formatuj jako</div>
<div class="t" style="left:704.4px;top:120.0px;font-size:11.5px;line-height:11.5px;color:#262626;letter-spacing:0.11px;">tabelę</div>
<div class="t" style="left:779.0px;top:104.0px;font-size:11.5px;line-height:11.5px;color:#262626;letter-spacing:0.01px;">Style</div>
<div class="t" style="left:765.6px;top:120.0px;font-size:11.5px;line-height:11.5px;color:#262626;letter-spacing:0.47px;">komórki</div>
<div class="t" style="left:700.3px;top:139.0px;font-size:10.5px;line-height:10.5px;color:#444444;letter-spacing:0.14px;">Style</div>
<div class="t" style="left:851.2px;top:70.0px;font-size:11.5px;line-height:11.5px;color:#262626;letter-spacing:0.12px;">Wstaw</div>
<div class="t" style="left:851.5px;top:93.0px;font-size:11.5px;line-height:11.5px;color:#262626;transform:scaleX(0.972);transform-origin:0 0;">Usuń</div>
<div class="t" style="left:851.5px;top:116.0px;font-size:11.5px;line-height:11.5px;color:#262626;letter-spacing:0.33px;">Formatuj</div>
<div class="t" style="left:850.5px;top:139.0px;font-size:10.5px;line-height:10.5px;color:#444444;letter-spacing:0.43px;">Komórki</div>
<div class="t" style="left:959.9px;top:104.0px;font-size:11.5px;line-height:11.5px;color:#262626;letter-spacing:0.10px;">Sortuj i</div>
<div class="t" style="left:961.4px;top:120.0px;font-size:11.5px;line-height:11.5px;color:#262626;letter-spacing:0.39px;">filtruj</div>
<div class="t" style="left:1006.0px;top:104.0px;font-size:11.5px;line-height:11.5px;color:#262626;letter-spacing:0.06px;">Znajdź i</div>
<div class="t" style="left:1001.8px;top:120.0px;font-size:11.5px;line-height:11.5px;color:#262626;transform:scaleX(0.962);transform-origin:0 0;">zaznacz</div>
<div class="t" style="left:958.4px;top:139.0px;font-size:10.5px;line-height:10.5px;color:#444444;letter-spacing:0.57px;">Edytowanie</div>
<div class="t" style="left:13.8px;top:171.0px;font-size:12px;line-height:12px;color:#262626;letter-spacing:0.06px;">H2</div>
<div class="t" style="left:514.7px;top:265.0px;font-size:13px;line-height:13px;color:#1a1a1a;transform:scaleX(0.974);transform-origin:0 0;-webkit-text-stroke:.3px #1a1a1a;">KOLUMNA</div>
<div class="t" style="left:672.0px;top:259.0px;font-size:13px;line-height:13px;color:#1a1a1a;transform:scaleX(0.888);transform-origin:0 0;-webkit-text-stroke:.3px #1a1a1a;">WIERSZ</div>
<div class="t" style="left:697.6px;top:402.0px;font-size:13px;line-height:13px;color:#1a1a1a;transform:scaleX(0.957);transform-origin:0 0;-webkit-text-stroke:.3px #1a1a1a;">KOMÓRKA</div>
<div class="t" style="left:944.1px;top:442.0px;font-size:13px;line-height:13px;color:#1a1a1a;transform:scaleX(0.875);transform-origin:0 0;-webkit-text-stroke:.3px #1a1a1a;">ZAKRES</div>
<div class="t" style="left:946.3px;top:491.0px;font-size:13px;line-height:13px;color:#1a1a1a;transform:scaleX(0.873);transform-origin:0 0;-webkit-text-stroke:.3px #1a1a1a;">ZAKRES</div>
<div class="t" style="left:113.6px;top:581.0px;font-size:12.5px;line-height:12.5px;color:#217346;transform:scaleX(0.958);transform-origin:0 0;font-weight:700;">Arkusz1</div>
<div class="t" style="left:8.9px;top:607.0px;font-size:11.5px;line-height:11.5px;color:#444444;letter-spacing:0.02px;">Gotowy</div>
<div class="t" style="left:1062.0px;top:607.0px;font-size:11.5px;line-height:11.5px;color:#444444;transform:scaleX(0.873);transform-origin:0 0;">100%</div>
<div class="t" style="left:97.8px;top:107.0px;font-size:12.5px;line-height:12.5px;color:#3a3a3a;transform:scaleX(0.775);transform-origin:0 0;font-weight:700;">B</div>
<div class="t" style="left:120.3px;top:105.0px;font-size:15px;line-height:15px;color:#3a3a3a;font-weight:700;font-family:'Liberation Serif',serif;font-style:italic;">I</div>
<div class="t" style="left:141.4px;top:107.0px;font-size:12px;line-height:12px;color:#3a3a3a;transform:scaleX(0.946);transform-origin:0 0;font-weight:700;">U</div>
<div class="t" style="left:262.4px;top:106.0px;font-size:12px;line-height:12px;color:#3a3a3a;letter-spacing:-0.02px;-webkit-text-stroke:.4px #3a3a3a;">A</div>
<div class="t" style="left:251.4px;top:77.0px;font-size:13px;line-height:13px;color:#3a3a3a;letter-spacing:0.53px;-webkit-text-stroke:.4px #3a3a3a;">A</div>
<div class="t" style="left:274.4px;top:79.0px;font-size:10.5px;line-height:10.5px;color:#3a3a3a;letter-spacing:0.18px;-webkit-text-stroke:.4px #3a3a3a;">A</div>
<div class="t" style="left:503.6px;top:106.0px;font-size:16px;line-height:16px;color:#3a3a3a;transform:scaleX(0.857);transform-origin:0 0;-webkit-text-stroke:.35px #3a3a3a;">%</div>
<div class="t" style="left:523.8px;top:108.0px;font-size:9.5px;line-height:9.5px;color:#3a3a3a;transform:scaleX(0.914);transform-origin:0 0;-webkit-text-stroke:.3px #3a3a3a;">000</div>
<div class="t" style="left:563.4px;top:106.0px;font-size:8px;line-height:8px;color:#3a3a3a;font-weight:700;">0</div>
<div class="t" style="left:556.0px;top:113.0px;font-size:8px;line-height:8px;color:#3a3a3a;letter-spacing:0.54px;font-weight:700;">,00</div>
<div class="t" style="left:578.0px;top:106.0px;font-size:8px;line-height:8px;color:#3a3a3a;letter-spacing:0.54px;font-weight:700;">,00</div>
<div class="t" style="left:583.4px;top:113.0px;font-size:8px;line-height:8px;color:#3a3a3a;letter-spacing:0.13px;font-weight:700;">,0</div>
<div class="t" style="left:963.6px;top:68.0px;font-size:15.5px;line-height:15.5px;color:#41719c;font-weight:700;">A</div>
<div class="t" style="left:964.6px;top:82.0px;font-size:15px;line-height:15px;color:#9b5fb4;font-weight:700;">Z</div></div>
<div class="a" style="left:0;top:0;width:1109px;height:100px;will-change:transform"><div class="kt" style="left:23px;top:16px;width:14px">1</div>
<div class="kt" style="left:55px;top:16px;width:14px">2</div>
<div class="kt" style="left:89px;top:16px;width:15px;opacity:.3">3</div>
<div class="kt" style="left:24px;top:54px;width:16px">P</div>
<div class="kt" style="left:116px;top:54px;width:17px">H</div>
<div class="kt" style="left:221px;top:55px;width:16px">V</div>
<div class="kt" style="left:313px;top:55px;width:16px">K</div>
<div class="kt" style="left:397px;top:55px;width:16px">Ł</div>
<div class="kt" style="left:462px;top:55px;width:16px">U</div>
<div class="kt" style="left:527px;top:55px;width:16px">R</div>
<div class="kt" style="left:596px;top:55px;width:16px">O</div>
<div class="kt" style="left:670px;top:55px;width:16px">Q</div>
<div class="kt" style="left:823px;top:51px;width:16px">M</div>
<div class="kt" style="left:1055px;top:51px;width:18px">Y1</div>
</div>
<div class="a" style="left:0;top:60px;width:1px;height:564px;background:#217346"></div>
<div class="a" style="left:1px;top:60px;width:1px;height:562px;background:#e9f1ec"></div>
<div class="a" style="left:1106px;top:60px;width:1px;height:562px;background:#e4efe8"></div>
<div class="a" style="left:1107px;top:60px;width:1px;height:564px;background:#8fb9a1"></div>
<div class="a" style="left:1108px;top:60px;width:1px;height:564px;background:#217346"></div>
<div class="a" style="left:0;top:622px;width:1109px;height:1px;background:#6fa386"></div>
<div class="a" style="left:0;top:623px;width:1109px;height:1px;background:#217346"></div>
</body></html>
